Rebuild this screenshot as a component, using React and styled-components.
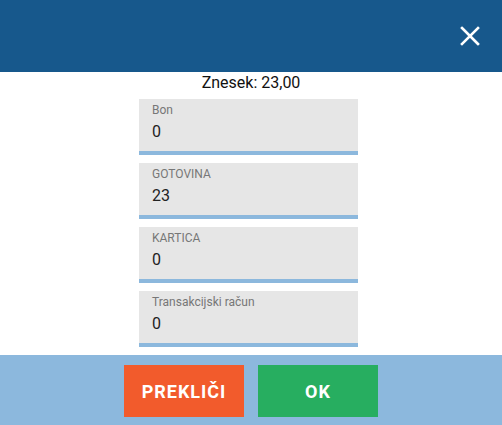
import React from "react";
import styled, { createGlobalStyle } from "styled-components";

const Global = createGlobalStyle`
  html, body { margin: 0; padding: 0; background: #fff; }
  body { font-family: Roboto, "Noto Sans", sans-serif; }
  * { box-sizing: border-box; }
`;

const Page = styled.div`
  width: 502px;
  height: 425px;
  display: flex;
  flex-direction: column;
  background: #fff;
`;

const Header = styled.header`
  height: 72px;
  background: #17588c;
  display: flex;
  align-items: center;
  justify-content: flex-end;
  padding-right: 20px;
`;

const CloseButton = styled.button`
  width: 24px;
  height: 24px;
  border: 0;
  padding: 0;
  background: transparent;
  display: flex;
  align-items: center;
  justify-content: center;
  cursor: pointer;
`;

const Body = styled.main`
  flex: 1;
  display: flex;
  flex-direction: column;
  align-items: center;
`;

const Amount = styled.div`
  font-size: 16px;
  line-height: 19px;
  color: #111;
  margin-top: 1px;
  margin-bottom: 7px;
`;

const Fields = styled.div`
  display: flex;
  flex-direction: column;
  gap: 8px;
  width: 219px;
  margin-right: 5px;
`;

const Field = styled.label`
  display: flex;
  flex-direction: column;
  height: 56px;
  background: #e6e6e6;
  border-bottom: 4px solid #8cb8dd;
  padding: 4px 12px 0 13px;
`;

const FieldLabel = styled.span`
  font-size: 12px;
  line-height: 14px;
  color: #777;
`;

const FieldValue = styled.span`
  font-size: 16px;
  line-height: 20px;
  color: #222;
  margin-top: 5px;
`;

const Footer = styled.footer`
  height: 70px;
  background: #8cb8dd;
  display: flex;
  justify-content: center;
  align-items: flex-start;
  padding-top: 10px;
  gap: 14px;
`;

const ActionButton = styled.button`
  width: 120px;
  height: 52px;
  border: 0;
  padding: 0;
  background: ${(p) => p.$bg};
  color: #fff;
  font-family: Roboto, sans-serif;
  font-weight: 700;
  font-size: 18px;
  letter-spacing: 1px;
  cursor: pointer;
`;

const fields = [
  { label: "Bon", value: "0" },
  { label: "GOTOVINA", value: "23" },
  { label: "KARTICA", value: "0" },
  { label: "Transakcijski račun", value: "0" },
];

export default function App() {
  return (
    <Page>
      <Global />
      <Header>
        <CloseButton aria-label="close">
          <svg width="20" height="20" viewBox="0 0 20 20">
            <path d="M2 2 L18 18 M18 2 L2 18" stroke="#fff" strokeWidth="2.6" strokeLinecap="square" />
          </svg>
        </CloseButton>
      </Header>
      <Body>
        <Amount>Znesek: 23,00</Amount>
        <Fields>
          {fields.map((f) => (
            <Field key={f.label}>
              <FieldLabel>{f.label}</FieldLabel>
              <FieldValue>{f.value}</FieldValue>
            </Field>
          ))}
        </Fields>
      </Body>
      <Footer>
        <ActionButton $bg="#f25b2c">PREKLIČI</ActionButton>
        <ActionButton $bg="#27ae60">OK</ActionButton>
      </Footer>
    </Page>
  );
}
